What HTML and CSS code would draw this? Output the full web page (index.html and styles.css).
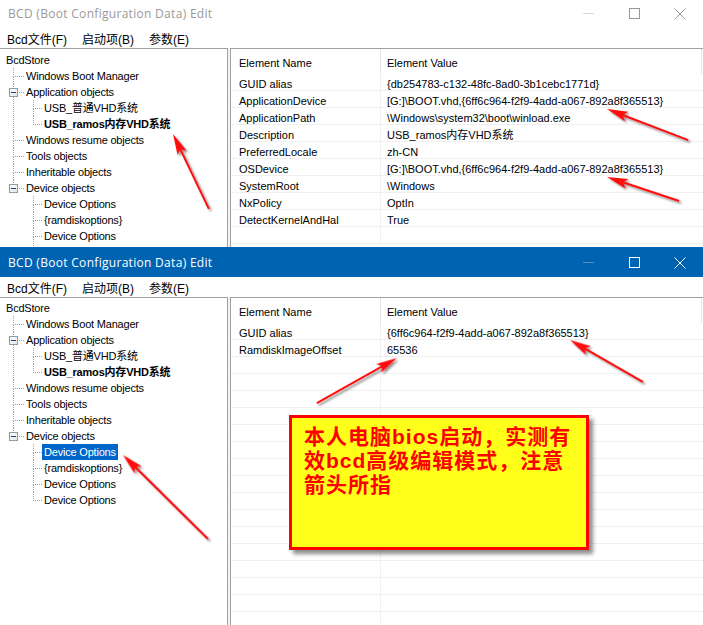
FILE: index.html
```html
<!DOCTYPE html>
<html>
<head>
<meta charset="utf-8">
<link rel="stylesheet" href="styles.css">
</head>
<body>
<div class="win win1">
  <div class="titlebar">
    <span class="title">BCD (Boot Configuration Data) Edit</span>
    <div class="caps">
      <svg class="cap" width="46" height="30" viewBox="0 0 46 30"><line x1="18" y1="15.5" x2="29" y2="15.5" class="cmin"/></svg>
      <svg class="cap" width="46" height="30" viewBox="0 0 46 30"><rect x="18.5" y="10.5" width="10" height="10" class="cst"/></svg>
      <svg class="cap" width="46" height="30" viewBox="0 0 46 30"><path d="M17.5 10.5 L28.5 21.5 M28.5 10.5 L17.5 21.5" class="cst"/></svg>
    </div>
  </div>
  <div class="menubar"><span>Bcd文件(F)</span><span>启动项(B)</span><span>参数(E)</span></div>
  <div class="main">
    <div class="tree">
      <ul class="root">
        <li><span class="lbl">BcdStore</span>
          <ul class="k1">
            <li><span class="lbl">Windows Boot Manager</span></li>
            <li><span class="box"></span><span class="lbl">Application objects</span>
              <ul class="k2">
                <li><span class="lbl">USB_普通VHD系统</span></li>
                <li><span class="lbl b">USB_ramos内存VHD系统</span></li>
              </ul>
            </li>
            <li><span class="lbl">Windows resume objects</span></li>
            <li><span class="lbl">Tools objects</span></li>
            <li><span class="lbl">Inheritable objects</span></li>
            <li><span class="box"></span><span class="lbl">Device objects</span>
              <ul class="k2">
                <li><span class="lbl">Device Options</span></li>
                <li><span class="lbl">{ramdiskoptions}</span></li>
                <li class="cont"><span class="lbl">Device Options</span></li>
              </ul>
            </li>
          </ul>
        </li>
      </ul>
    </div>
    <div class="split"></div>
    <div class="list">
      <div class="lh"><div>Element Name</div><div>Element Value</div></div>
      <div class="row"><div>GUID alias</div><div>{db254783-c132-48fc-8ad0-3b1cebc1771d}</div></div>
      <div class="row"><div>ApplicationDevice</div><div>[G:]\BOOT.vhd,{6ff6c964-f2f9-4add-a067-892a8f365513}</div></div>
      <div class="row"><div>ApplicationPath</div><div>\Windows\system32\boot\winload.exe</div></div>
      <div class="row"><div>Description</div><div>USB_ramos内存VHD系统</div></div>
      <div class="row"><div>PreferredLocale</div><div>zh-CN</div></div>
      <div class="row"><div>OSDevice</div><div>[G:]\BOOT.vhd,{6ff6c964-f2f9-4add-a067-892a8f365513}</div></div>
      <div class="row"><div>SystemRoot</div><div>\Windows</div></div>
      <div class="row"><div>NxPolicy</div><div>OptIn</div></div>
      <div class="row"><div>DetectKernelAndHal</div><div>True</div></div>
      <div class="row"><div></div><div></div></div>
    </div>
  </div>
</div>

<div class="win win2 active">
  <div class="titlebar">
    <span class="title">BCD (Boot Configuration Data) Edit</span>
    <div class="caps">
      <svg class="cap" width="46" height="30" viewBox="0 0 46 30"><line x1="18" y1="15.5" x2="29" y2="15.5" class="cmin"/></svg>
      <svg class="cap" width="46" height="30" viewBox="0 0 46 30"><rect x="18.5" y="10.5" width="10" height="10" class="cst"/></svg>
      <svg class="cap" width="46" height="30" viewBox="0 0 46 30"><path d="M17.5 10.5 L28.5 21.5 M28.5 10.5 L17.5 21.5" class="cst"/></svg>
    </div>
  </div>
  <div class="menubar"><span>Bcd文件(F)</span><span>启动项(B)</span><span>参数(E)</span></div>
  <div class="main">
    <div class="tree">
      <ul class="root">
        <li><span class="lbl">BcdStore</span>
          <ul class="k1">
            <li><span class="lbl">Windows Boot Manager</span></li>
            <li><span class="box"></span><span class="lbl">Application objects</span>
              <ul class="k2">
                <li><span class="lbl">USB_普通VHD系统</span></li>
                <li><span class="lbl b">USB_ramos内存VHD系统</span></li>
              </ul>
            </li>
            <li><span class="lbl">Windows resume objects</span></li>
            <li><span class="lbl">Tools objects</span></li>
            <li><span class="lbl">Inheritable objects</span></li>
            <li><span class="box"></span><span class="lbl">Device objects</span>
              <ul class="k2">
                <li><span class="lbl sel">Device Options</span></li>
                <li><span class="lbl">{ramdiskoptions}</span></li>
                <li><span class="lbl">Device Options</span></li>
                <li><span class="lbl">Device Options</span></li>
              </ul>
            </li>
          </ul>
        </li>
      </ul>
    </div>
    <div class="split"></div>
    <div class="list">
      <div class="lh"><div>Element Name</div><div>Element Value</div></div>
      <div class="row"><div>GUID alias</div><div>{6ff6c964-f2f9-4add-a067-892a8f365513}</div></div>
      <div class="row"><div>RamdiskImageOffset</div><div>65536</div></div>
      <div class="row"><div></div><div></div></div>
      <div class="row"><div></div><div></div></div>
      <div class="row"><div></div><div></div></div>
      <div class="row"><div></div><div></div></div>
      <div class="row"><div></div><div></div></div>
      <div class="row"><div></div><div></div></div>
      <div class="row"><div></div><div></div></div>
      <div class="row"><div></div><div></div></div>
      <div class="row"><div></div><div></div></div>
      <div class="row"><div></div><div></div></div>
      <div class="row"><div></div><div></div></div>
      <div class="row"><div></div><div></div></div>
      <div class="row"><div></div><div></div></div>
      <div class="row"><div></div><div></div></div>
      <div class="row"><div></div><div></div></div>
      <div class="row"><div></div><div></div></div>
    </div>
  </div>
</div>

<div class="note">本人电脑bios启动，实测有<br>效bcd高级编辑模式，注意<br>箭头所指</div>

<svg class="arrows" width="703" height="625" viewBox="0 0 703 625">
  <defs>
    <filter id="sh" x="-20%" y="-20%" width="140%" height="140%">
      <feDropShadow dx="2" dy="2" stdDeviation="1.2" flood-color="#000" flood-opacity="0.45"/>
    </filter>
    <g id="arrowhead">
      <path d="M0 0 L-21 -5 L-17 0 L-21 5 Z" fill="#ff1010"/>
    </g>
  </defs>
  <g filter="url(#sh)">
    <g transform="translate(173 134) rotate(-115.6)"><line x1="-83" y1="0" x2="-16" y2="0" class="shaft"/><use href="#arrowhead"/></g>
    <g transform="translate(607 109) rotate(-159.06)"><line x1="-87" y1="0" x2="-16" y2="0" class="shaft"/><use href="#arrowhead"/></g>
    <g transform="translate(607 177) rotate(-161.57)"><line x1="-76" y1="0" x2="-16" y2="0" class="shaft"/><use href="#arrowhead"/></g>
    <g transform="translate(397 358) rotate(-29.36)"><line x1="-92" y1="0" x2="-16" y2="0" class="shaft"/><use href="#arrowhead"/></g>
    <g transform="translate(570 340) rotate(-150.09)"><line x1="-84" y1="0" x2="-16" y2="0" class="shaft"/><use href="#arrowhead"/></g>
    <g transform="translate(123 455) rotate(-135.34)"><line x1="-119.5" y1="0" x2="-16" y2="0" class="shaft"/><use href="#arrowhead"/></g>
  </g>
</svg>
</body>
</html>
```
FILE: styles.css
```css
html, body {
  margin: 0;
  padding: 0;
}
body {
  width: 703px;
  height: 625px;
  overflow: hidden;
  position: relative;
  background: #ffffff;
  font-family: "Liberation Sans", "Noto Sans CJK SC", sans-serif;
  font-size: 11px;
  color: #000;
}
.win {
  display: flex;
  flex-direction: column;
  overflow: hidden;
  background: #fff;
}
.win1 {
  height: 249px;
  margin-top: -2px;
}
.win2 {
  height: 378px;
}
.titlebar {
  height: 30px;
  flex: none;
  display: flex;
  align-items: center;
  justify-content: space-between;
  background: #fff;
}
.win2 .titlebar {
  background: #0063b1;
}
.title {
  padding-left: 8px;
  font-family: "Open Sans", "Liberation Sans", sans-serif;
  font-size: 12px;
  color: #999999;
  letter-spacing: 0.3px;
}
.win2 .title {
  color: #ffffff;
}
.caps {
  display: flex;
  height: 30px;
}
.cap {
  display: block;
}
.cmin {
  stroke: #d8d8d8;
  stroke-width: 1;
}
.cst {
  fill: none;
  stroke: #999999;
  stroke-width: 1;
}
.win2 .cmin {
  stroke: #5590c8;
}
.win2 .cst {
  stroke: #ffffff;
}
.menubar {
  height: 20px;
  flex: none;
  display: flex;
  align-items: center;
  gap: 15px;
  padding-left: 7px;
  font-size: 12px;
  background: #fff;
}
.main {
  flex: 1;
  display: flex;
  min-height: 0;
}
.tree {
  width: 228px;
  box-sizing: border-box;
  flex: none;
  border-top: 1px solid #a0a0a0;
  border-right: 1px solid #a0a0a0;
  padding-top: 2px;
  overflow: hidden;
  letter-spacing: -0.2px;
}
.win1 .tree {
  padding-top: 3px;
}
.split {
  width: 2px;
  flex: none;
  background: #f4f4f4;
}
.list {
  flex: 1;
  border-top: 1px solid #a0a0a0;
  border-left: 1px solid #a0a0a0;
  overflow: hidden;
}
.tree ul {
  list-style: none;
  margin: 0;
  padding: 0;
}
.tree ul.root {
  padding-left: 4px;
}
.tree ul.k1 {
  margin-left: 9px;
}
.tree ul.k2 {
  margin-left: 9px;
}
.tree li {
  position: relative;
}
.tree .k1 > li {
  padding-left: 11px;
}
.tree .k2 > li {
  padding-left: 9px;
}
.tree .k1 > li::before,
.tree .k2 > li::before {
  content: "";
  position: absolute;
  left: 0;
  top: 0;
  height: 8px;
  width: 10px;
  border-left: 1px dotted #a0a0a0;
  border-bottom: 1px dotted #a0a0a0;
}
.tree .k2 > li::before {
  width: 8px;
}
.tree .k1 > li:not(:last-child)::after,
.tree .k2 > li:not(:last-child)::after,
.tree .k2 > li.cont::after {
  content: "";
  position: absolute;
  left: 0;
  top: 8px;
  bottom: 0;
  border-left: 1px dotted #a0a0a0;
}
.tree .k2 > li.cont {
  padding-bottom: 4px;
}
.lbl {
  display: inline-block;
  height: 16px;
  line-height: 16px;
  padding: 0 2px;
  white-space: nowrap;
}
.lbl.b {
  font-weight: bold;
}
.lbl.sel {
  background: #0066cc;
  color: #fff;
}
.box {
  position: absolute;
  left: -4px;
  top: 4px;
  width: 9px;
  height: 9px;
  box-sizing: border-box;
  border: 1px solid #8e9cb0;
  background: linear-gradient(135deg, #ffffff 0%, #e6e6e6 100%);
  z-index: 1;
}
.box::after {
  content: "";
  position: absolute;
  left: 1px;
  top: 3px;
  width: 5px;
  height: 1px;
  background: #1c3f86;
}
.lh {
  display: grid;
  grid-template-columns: 150px 321px;
  height: 25px;
}
.lh > div {
  box-sizing: border-box;
  border-right: 1px solid #e5e5e5;
  padding-top: 4px;
  line-height: 21px;
  padding-left: 8px;
}
.lh > div + div {
  padding-left: 6px;
}
.row {
  display: grid;
  grid-template-columns: 150px 1fr;
  grid-template-rows: 16px;
  height: 17px;
  box-sizing: border-box;
  border-bottom: 1px solid #f0f0f0;
}
.row > div {
  line-height: 16px;
  padding-top: 2px;
  white-space: nowrap;
  padding-left: 8px;
}
.row > div:first-child {
  box-sizing: border-box;
  border-right: 1px solid #f0f0f0;
  padding-top: 0;
  padding-left: 0;
}
.row > div:first-child::before {
  content: "";
}
.row > div:first-child {
  padding: 2px 0 0 8px;
  height: 16px;
}
.row > div + div {
  padding-left: 6px;
}
.note {
  position: absolute;
  left: 289px;
  top: 415px;
  width: 300px;
  height: 135px;
  box-sizing: border-box;
  border: 3px solid #ff0000;
  background: #ffff19;
  box-shadow: 4px 4px 4px rgba(0, 0, 0, 0.45);
  padding: 7px 0 0 12px;
  color: #ff0000;
  font-family: "Liberation Sans", "Noto Sans CJK SC", sans-serif;
  font-weight: bold;
  font-size: 21px;
  letter-spacing: 1px;
  line-height: 24px;
}
.arrows {
  position: absolute;
  left: 0;
  top: 0;
  pointer-events: none;
}
.shaft {
  stroke: #ff1010;
  stroke-width: 2;
}
```
